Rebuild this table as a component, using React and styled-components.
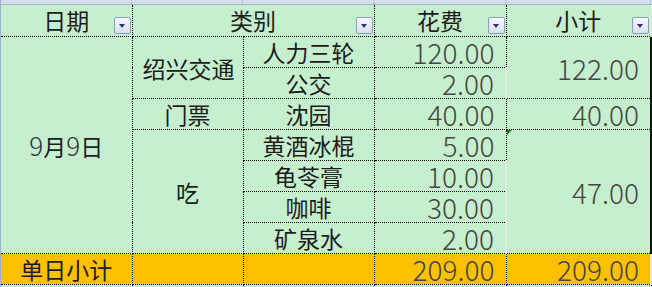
import React from 'react'
import styled, { createGlobalStyle } from 'styled-components'

const GlobalStyle = createGlobalStyle`
  body {
    margin: 0;
    background: #c6efce;
    font-family: "Noto Sans CJK SC", "Noto Sans", sans-serif;
  }
`

const GREEN = '#c6efce'
const ORANGE = '#ffc000'
const NUM_FONT = '"Noto Sans CJK SC Light", "Noto Sans CJK SC", "Noto Sans", sans-serif'

const COLUMNS = [
  { letter: 'A', width: 131 },
  { letter: 'B', width: 111 },
  { letter: 'C', width: 131 },
  { letter: 'D', width: 132 },
  { letter: 'E', width: 145 },
]

const rows = [
  { item: '人力三轮', cost: '120.00' },
  { item: '公交', cost: '2.00' },
  { item: '沈园', cost: '40.00' },
  { item: '黄酒冰棍', cost: '5.00' },
  { item: '龟苓膏', cost: '10.00' },
  { item: '咖啡', cost: '30.00' },
  { item: '矿泉水', cost: '2.00' },
]

// category and subtotal cells sit on the first row of their group
const groups = {
  0: { cat: '绍兴交通', catSpan: 2, sum: '122.00', sumSpan: 2 },
  2: { cat: '门票', catSpan: 1, sum: '40.00', sumSpan: 1 },
  3: { cat: '吃', catSpan: 4, sum: '47.00', sumSpan: 4, flagged: true },
}

const Sheet = styled.div`
  width: 652px;
  height: 287px;
  overflow: hidden;
  box-sizing: border-box;
  border-left: 1px solid #9fb3cd;
  background: ${GREEN};
`

const Strip = styled.div`
  display: flex;
  height: 4px;
  overflow: hidden;
  background: #d5dfec;
  border-bottom: 1px solid #9eb6ce;
`

const StripCell = styled.div`
  flex: 0 0 ${p => p.$w}px;
  display: flex;
  justify-content: center;
  align-items: flex-end;
  box-sizing: border-box;
  border-right: 1px solid #b3c4da;
  font: 13px/13px "Liberation Sans", Arial, sans-serif;
  color: #27415f;

  span {
    margin-bottom: 2px;
  }
`

const Grid = styled.table`
  border-collapse: collapse;
  table-layout: fixed;
  width: 651px;
`

const Row = styled.tr`
  height: 31px;
  background: ${p => (p.$total ? ORANGE : GREEN)};
`

const Cell = styled.td`
  position: relative;
  box-sizing: border-box;
  border: 1px dotted #000;
  padding: 1px 10px 0;
  font-size: 23px;
  line-height: 26px;
  color: #1c1c1c;
  text-align: center;
  vertical-align: middle;
  white-space: nowrap;

  &:first-child {
    border-left: none;
  }

  &:last-child {
    border-right: 2px solid ${p => (p.$edge ? '#111' : '#d9eedc')};
  }

  ${p =>
    p.$flag &&
    `&::before {
      content: '';
      position: absolute;
      top: 0;
      left: 0;
      border-top: 5px solid #1b7d1b;
      border-right: 5px solid transparent;
    }`}
`

const NumCell = styled(Cell)`
  padding-right: 11px;
  font-family: ${NUM_FONT};
  font-size: 28px;
  font-weight: 300;
  line-height: 24px;
  color: #454545;
  text-align: right;
`

const HeadCell = styled(Cell)`
  padding-top: 0;
  border-top: none;
`

const FilterButton = styled.span`
  position: absolute;
  right: 1px;
  bottom: 2px;
  width: 17px;
  height: 17px;
  box-sizing: border-box;
  border: 1px solid #8d9fc0;
  border-radius: 2px;
  background: linear-gradient(#f7f8fb, #d9dfea);

  &::after {
    content: '';
    position: absolute;
    left: 4px;
    top: 6px;
    border-top: 4px solid #25337f;
    border-left: 3.5px solid transparent;
    border-right: 3.5px solid transparent;
  }
`

const DateText = styled.span`
  b {
    font-family: ${NUM_FONT};
    font-weight: 300;
    font-size: 26px;
    color: #333;
  }
`

const Filler = styled.tr`
  height: 8px;
  background: ${GREEN};

  td {
    border-left: 1px dotted #000;
    border-right: 1px dotted #000;
    border-top: none;
    padding: 0;
  }

  td:first-child {
    border-left: none;
  }
`

export default function App() {
  return (
    <Sheet>
      <GlobalStyle />
      <Strip>
        {COLUMNS.map(c => (
          <StripCell key={c.letter} $w={c.width}><span>{c.letter}</span></StripCell>
        ))}
      </Strip>
      <Grid>
        <colgroup>
          {COLUMNS.map(c => <col key={c.letter} width={c.width} />)}
        </colgroup>
        <tbody>
          <Row>
            <HeadCell>日期<FilterButton /></HeadCell>
            <HeadCell colSpan={2}>类别<FilterButton /></HeadCell>
            <HeadCell>花费<FilterButton /></HeadCell>
            <HeadCell>小计<FilterButton /></HeadCell>
          </Row>
          {rows.map((r, i) => {
            const g = groups[i]
            return (
              <Row key={i}>
                {i === 0 && (
                  <Cell rowSpan={rows.length}>
                    <DateText><b>9</b>月<b>9</b>日</DateText>
                  </Cell>
                )}
                {g && <Cell rowSpan={g.catSpan}>{g.cat}</Cell>}
                <Cell>{r.item}</Cell>
                <NumCell>{r.cost}</NumCell>
                {g && (
                  <NumCell $edge $flag={g.flagged} rowSpan={g.sumSpan}>
                    {g.sum}
                  </NumCell>
                )}
              </Row>
            )
          })}
          <Row $total>
            <Cell>单日小计</Cell>
            <Cell />
            <Cell />
            <NumCell>209.00</NumCell>
            <NumCell>209.00</NumCell>
          </Row>
          <Filler>
            <td /><td /><td /><td /><td />
          </Filler>
        </tbody>
      </Grid>
    </Sheet>
  )
}
